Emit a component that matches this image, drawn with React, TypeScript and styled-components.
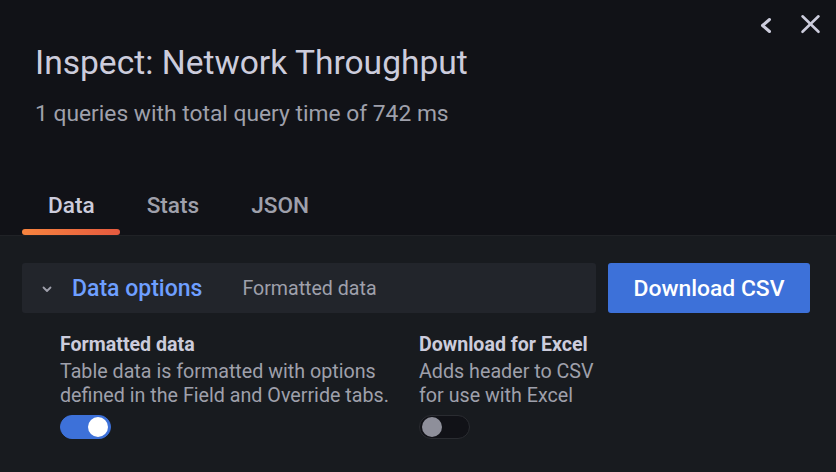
import React from 'react';
import styled, { createGlobalStyle } from 'styled-components';

const GlobalStyle = createGlobalStyle`
    html, body {
        margin: 0;
        padding: 0;
        background: #181b1f;
    }
    body {
        font-family: Roboto, "Liberation Sans", Arial, sans-serif;
        -webkit-font-smoothing: antialiased;
    }
`;

const Drawer = styled.div`
    width: 836px;
    height: 472px;
    display: flex;
    flex-direction: column;
    background: #181b1f;
    overflow: hidden;
`;

const Header = styled.header`
    background: #111217;
    border-bottom: 1px solid #202226;
    display: flex;
    flex-direction: column;
`;

const Actions = styled.div`
    display: flex;
    justify-content: flex-end;
    align-items: center;
    gap: 20px;
    padding: 12px 14px 0 0;
`;

const IconButton = styled.button`
    width: 24px;
    height: 24px;
    padding: 0;
    border: none;
    background: transparent;
    color: #ccccdc;
    cursor: pointer;
    display: flex;
`;

const TitleBlock = styled.div`
    padding: 7px 0 0 35px;
`;

const Title = styled.h1`
    margin: 0;
    font-size: 33.6px;
    line-height: 40px;
    font-weight: 400;
    color: #ccccdc;
`;

const Subtitle = styled.div`
    margin-top: 17px;
    font-size: 22.8px;
    line-height: 28px;
    color: #9fa0ab;
`;

const TabBar = styled.nav`
    display: flex;
    margin: 64px 0 0 22px;
`;

const Tab = styled.div<{ active?: boolean }>`
    position: relative;
    padding: 0 26px 15px;
    font-size: 22.6px;
    line-height: 28px;
    font-weight: 500;
    color: ${props => props.active ? '#ccccdc' : '#9fa0ab'};
    cursor: pointer;

    &::after {
        content: '';
        display: ${props => props.active ? 'block' : 'none'};
        position: absolute;
        left: 0;
        right: 1px;
        bottom: 0;
        height: 6px;
        border-radius: 3px;
        background: linear-gradient(90deg, #f7843f 0%, #e55a3f 100%);
    }
`;

const Body = styled.section`
    padding: 27px 26px 0 22px;
`;

const Toolbar = styled.div`
    display: flex;
    gap: 12px;
`;

const OptionsBar = styled.div`
    flex: 1;
    height: 50px;
    display: flex;
    align-items: center;
    background: #22252b;
    border-radius: 3px;
    padding-left: 19px;
`;

const Caret = styled.span`
    display: flex;
    color: #9fa0ab;
    margin: 2px 19px 0 0;
`;

const OptionsLabel = styled.span`
    font-size: 23px;
    font-weight: 500;
    color: #6e9fff;
`;

const OptionsSummary = styled.span`
    margin-left: 40px;
    font-size: 19.6px;
    color: #9fa0ab;
`;

const PrimaryButton = styled.button`
    width: 202px;
    height: 50px;
    border: none;
    border-radius: 3px;
    background: #3d71d9;
    color: #ffffff;
    font-family: inherit;
    font-size: 22.9px;
    font-weight: 500;
    cursor: pointer;
`;

const OptionGrid = styled.div`
    display: grid;
    grid-template-columns: 359px 220px;
    padding: 20px 0 0 38px;
`;

const Field = styled.div`
    display: flex;
    flex-direction: column;
`;

const FieldLabel = styled.div`
    font-size: 19.6px;
    line-height: 24px;
    font-weight: 700;
    color: #ccccdc;
`;

const FieldDescription = styled.div`
    margin-top: 3px;
    font-size: 19.7px;
    line-height: 24px;
    color: #9fa0ab;
`;

const Switch = styled.div<{ on?: boolean }>`
    margin-top: 7px;
    width: 51px;
    height: 24px;
    box-sizing: border-box;
    border-radius: 12px;
    display: flex;
    align-items: center;
    justify-content: ${props => props.on ? 'flex-end' : 'flex-start'};
    padding: 0 2px;
    background: ${props => props.on ? '#3d71d9' : '#111217'};
    border: 1px solid ${props => props.on ? '#3d71d9' : '#2a2c31'};
    cursor: pointer;

    &::before {
        content: '';
        width: 20px;
        height: 20px;
        border-radius: 50%;
        background: ${props => props.on ? '#ffffff' : '#8e8f9a'};
    }
`;

const tabs = ['Data', 'Stats', 'JSON'];

export default function App() {
    return (
        <Drawer>
            <GlobalStyle />
            <Header>
                <Actions>
                    <IconButton aria-label="Collapse">
                        <svg width="24" height="24" viewBox="0 0 24 24" fill="none" stroke="currentColor" strokeWidth="3" strokeLinecap="round" strokeLinejoin="round">
                            <polyline points="15.5,7.5 8.5,13.5 15.5,19.5" />
                        </svg>
                    </IconButton>
                    <IconButton aria-label="Close">
                        <svg width="24" height="24" viewBox="0 0 24 24" fill="none" stroke="currentColor" strokeWidth="2.6" strokeLinecap="round">
                            <line x1="4.5" y1="4.3" x2="20.5" y2="19.8" />
                            <line x1="20.5" y1="4.3" x2="4.5" y2="19.8" />
                        </svg>
                    </IconButton>
                </Actions>
                <TitleBlock>
                    <Title>Inspect: Network Throughput</Title>
                    <Subtitle>1 queries with total query time of 742 ms</Subtitle>
                </TitleBlock>
                <TabBar>
                    {tabs.map((tab, index) => (
                        <Tab key={tab} active={index === 0}>{tab}</Tab>
                    ))}
                </TabBar>
            </Header>
            <Body>
                <Toolbar>
                    <OptionsBar>
                        <Caret>
                            <svg width="12" height="12" viewBox="0 0 12 12" fill="none" stroke="currentColor" strokeWidth="1.8" strokeLinecap="round" strokeLinejoin="round">
                                <polyline points="2.5,4.5 6,8 9.5,4.5" />
                            </svg>
                        </Caret>
                        <OptionsLabel>Data options</OptionsLabel>
                        <OptionsSummary>Formatted data</OptionsSummary>
                    </OptionsBar>
                    <PrimaryButton>Download CSV</PrimaryButton>
                </Toolbar>
                <OptionGrid>
                    <Field>
                        <FieldLabel>Formatted data</FieldLabel>
                        <FieldDescription>
                            Table data is formatted with options<br />
                            defined in the Field and Override tabs.
                        </FieldDescription>
                        <Switch on />
                    </Field>
                    <Field>
                        <FieldLabel>Download for Excel</FieldLabel>
                        <FieldDescription>
                            Adds header to CSV<br />
                            for use with Excel
                        </FieldDescription>
                        <Switch />
                    </Field>
                </OptionGrid>
            </Body>
        </Drawer>
    );
}
